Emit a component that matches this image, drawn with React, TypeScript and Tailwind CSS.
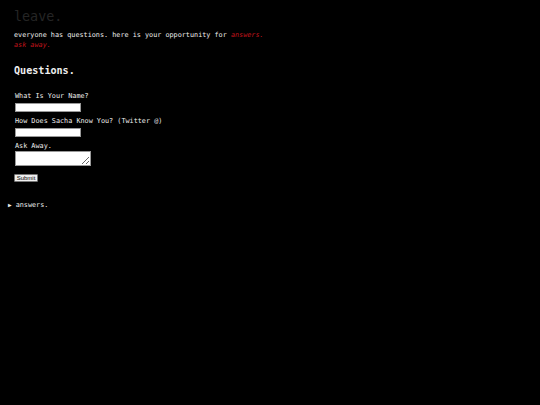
export default function App() {
  return (
    <div className="min-h-[405px] bg-black text-[#eeeeee] font-['DejaVu_Sans_Mono',monospace]">
      <div className="px-[14px] pt-[8px]">
        <h1 className="text-[13.4px] leading-[18px] text-[#252525]">leave.</h1>
        <p className="mt-[4px] text-[6.8px] leading-[10px]">
          everyone has questions. here is your opportunity for{' '}
          <span className="italic text-[#c0141b]">answers.</span>
          <br />
          <span className="italic text-[#c0141b]">ask away.</span>
        </p>
        <h2 className="mt-[14px] text-[10.1px] leading-[14px] font-bold">Questions.</h2>
        <form className="mt-[13px] flex flex-col pl-[1px]" onSubmit={(e) => e.preventDefault()}>
          <label className="text-[6.8px] leading-[10px]">What Is Your Name?</label>
          <input className="mt-[2px] h-[9px] w-[66px] bg-white border border-[#999]" />
          <label className="mt-[4px] text-[6.8px] leading-[10px]">How Does Sacha Know You? (Twitter @)</label>
          <input className="mt-[2px] h-[9px] w-[66px] bg-white border border-[#999]" />
          <label className="mt-[4px] text-[6.8px] leading-[10px]">Ask Away.</label>
          <textarea className="mt-0 h-[15px] w-[76px] bg-white border border-[#999] resize" />
          <div className="mt-[8px] -ml-[1px]">
            <button
              type="submit"
              className="h-[8px] w-[24px] bg-[#efefef] border border-[#767676] rounded-[1px] text-black text-[6px] leading-[6px] font-['Liberation_Sans',sans-serif] flex items-center justify-center"
            >
              Submit
            </button>
          </div>
        </form>
      </div>
      <details className="mt-[18px] pl-[8px]">
        <summary className="text-[6.8px] leading-[10px] list-none flex items-center gap-[4px]">
          <span className="text-[6px]">▶</span>
          <span>answers.</span>
        </summary>
      </details>
    </div>
  );
}
